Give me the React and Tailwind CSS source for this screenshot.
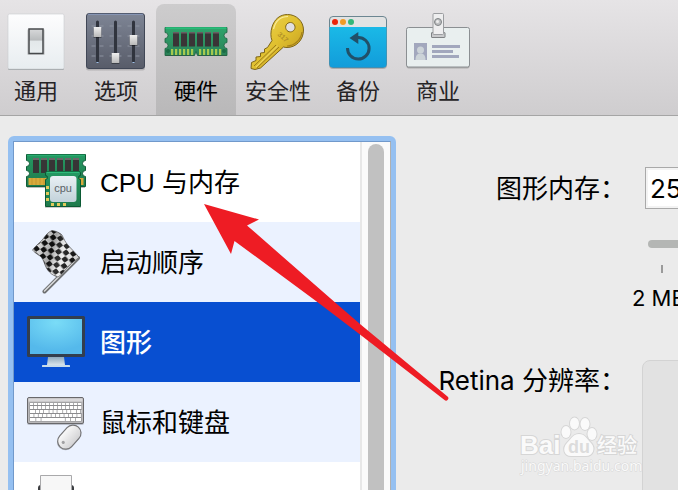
import React, { useState } from "react";

const SANS = "font-['Liberation_Sans','Noto_Sans_CJK_SC',sans-serif]";
const UI = "font-[Inter,'Noto_Sans_CJK_SC',sans-serif]";

function GeneralIcon() {
  return (
    <svg viewBox="0 0 64 60" className="w-16 h-15" aria-hidden="true">
      <defs>
        <linearGradient id="gen-plate" x1="0" y1="0" x2="0" y2="1">
          <stop offset="0" stopColor="#fdfdfe" />
          <stop offset="1" stopColor="#e8edf0" />
        </linearGradient>
        <linearGradient id="gen-switch" x1="0" y1="0" x2="0" y2="1">
          <stop offset="0" stopColor="#d8d9da" />
          <stop offset="0.45" stopColor="#b9bcbe" />
          <stop offset="0.5" stopColor="#e3e8ea" />
          <stop offset="1" stopColor="#e9eef0" />
        </linearGradient>
      </defs>
      <rect x="4" y="3" width="56" height="55" rx="1.5" fill="#9fa3a6" />
      <rect x="4" y="2" width="56" height="55" rx="1.5" fill="url(#gen-plate)" stroke="#c9cdd0" strokeWidth="0.6" />
      <rect x="23" y="17" width="18" height="26" rx="1.5" fill="#00000020" />
      <rect x="25" y="17" width="14" height="24.5" fill="url(#gen-switch)" stroke="#474a4c" strokeWidth="1.5" />
    </svg>
  );
}

function OptionsIcon() {
  const sliders = [
    { x: 13.5, y: 15 },
    { x: 31.5, y: 41 },
    { x: 49.5, y: 23 },
  ];
  return (
    <svg viewBox="0 0 64 60" className="w-16 h-15" aria-hidden="true">
      <defs>
        <linearGradient id="opt-plate" x1="0" y1="0" x2="0" y2="1">
          <stop offset="0" stopColor="#7e8595" />
          <stop offset="1" stopColor="#585c69" />
        </linearGradient>
        <linearGradient id="opt-knob" x1="0" y1="0" x2="0" y2="1">
          <stop offset="0" stopColor="#f0f0f0" />
          <stop offset="1" stopColor="#b9b9b9" />
        </linearGradient>
      </defs>
      <rect x="2" y="2.5" width="59" height="56" rx="2.5" fill="#0000002a" />
      <rect x="2.5" y="1.5" width="58" height="55" rx="2.5" fill="url(#opt-plate)" stroke="#414756" />
      <path d="M4 2.2h55" stroke="#8fa3cc" strokeWidth="0.8" />
      {sliders.map((s) => (
        <g key={s.x}>
          {[14, 24, 34, 44].map((y) => (
            <path key={y} d={`M${s.x - 6} ${y}h4M${s.x + 2} ${y}h4`} stroke="#8d93a1" strokeWidth="1.2" />
          ))}
          <path d={`M${s.x} 10v39`} stroke="#30343e" strokeWidth="3" strokeLinecap="round" />
          <path d={`M${s.x - 1} 50.5h2`} stroke="#9fc0e8" strokeWidth="1" />
          <rect x={s.x - 4} y={s.y + 1} width="8" height="10" rx="0.5" fill="#00000055" />
          <rect x={s.x - 3.8} y={s.y} width="7.6" height="10" rx="0.5" fill="url(#opt-knob)" />
        </g>
      ))}
    </svg>
  );
}

function HardwareIcon() {
  return (
    <svg viewBox="0 0 64 60" className="w-16 h-15" aria-hidden="true">
      <defs>
        <linearGradient id="ram-board" x1="0" y1="0" x2="0" y2="1">
          <stop offset="0" stopColor="#2fa46c" />
          <stop offset="1" stopColor="#2b8157" />
        </linearGradient>
      </defs>
      <path
        d="M1 15.5h62v5a3 3 0 0 0 0 6v4a3 3 0 0 0 0 6v7h-29.500l-1.500-4l-1.500 4h-29.500v-7a3 3 0 0 0 0-6v-4a3 3 0 0 0 0-6z"
        fill="url(#ram-board)"
        stroke="#17613c"
        strokeWidth="0.8"
      />
      <path d="M1.5 16h61" stroke="#27c57c" strokeWidth="1.4" />
      <path d="M2 43.5h28M34 43.5h28" stroke="#2a5f43" />
      {[9, 17, 25, 33, 41, 49].map((x) => (
        <g key={x}>
          <rect x={x} y="20" width="6" height="14.5" fill="#3a3436" />
          <rect x={x} y="20" width="6" height="1.5" fill="#685f62" />
        </g>
      ))}
      {[7, 11, 15, 19, 23, 27, 35, 39, 43, 47, 51, 55].map((x) => (
        <rect key={x} x={x} y="37" width="2.2" height="6" fill="#a6c94f" />
      ))}
      <circle cx="4" cy="39" r="2" fill="#1c6b44" />
      <circle cx="60" cy="39" r="2" fill="#1c6b44" />
    </svg>
  );
}

function SecurityIcon() {
  return (
    <svg viewBox="0 0 64 60" className="w-16 h-15" aria-hidden="true">
      <defs>
        <linearGradient id="key-gold" x1="0" y1="0" x2="1" y2="1">
          <stop offset="0" stopColor="#efd75a" />
          <stop offset="0.5" stopColor="#e0c02f" />
          <stop offset="1" stopColor="#b98f1c" />
        </linearGradient>
      </defs>
      <path
        fillRule="evenodd"
        d="M41.5 2.5C50.500 2.5 57.500 9.500 57.500 18C57.500 28 50 35.500 41 35.500C39.500 35.500 38.500 35.300 37.500 35L14.500 56L9 57.500L5 56.500L5.500 50.500L10 48.500V45L14.500 44.500V41L18.500 40.500V37L21.500 35.500L26 28.500C24.500 25 24.500 20 26 15C28.500 7 34 2.500 41.500 2.500ZM44.300 10.500a4.700 4.700 0 1 0 0.100 0z"
        fill="url(#key-gold)"
        stroke="#7d6519"
        strokeWidth="1"
      />
      <path d="M30 33L8 54M33 35L11 56" stroke="#9c7c1c" strokeWidth="1" />
      <path d="M31.500 34L10 55" stroke="#f2e07a" strokeWidth="0.8" />
      <path d="M27.500 17C29.500 9 35 4.500 42 4.500" fill="none" stroke="#f9ec9c" strokeWidth="1.2" />
      <path d="M56 20C55 28 48 34 41 34" fill="none" stroke="#a5811b" strokeWidth="1.2" />
      <text
        x="31"
        y="23"
        transform="rotate(42 31 23)"
        fontSize="7"
        fontWeight="700"
        fill="#b39328"
        className="font-['Liberation_Sans',sans-serif]"
      >
        317
      </text>
    </svg>
  );
}

function BackupIcon() {
  return (
    <svg viewBox="0 0 64 60" className="w-16 h-15" aria-hidden="true">
      <defs>
        <linearGradient id="bak-fill" x1="0" y1="0" x2="0" y2="1">
          <stop offset="0" stopColor="#1ab9e7" />
          <stop offset="1" stopColor="#129cda" />
        </linearGradient>
      </defs>
      <rect x="3" y="5" width="58" height="52" rx="4" fill="#00000033" />
      <rect x="3.5" y="4.5" width="57" height="51" rx="3.5" fill="#e2e3e3" stroke="#5f7c88" strokeWidth="0.9" />
      <path d="M4 15h56.500v37a3.500 3.500 0 0 1-3.500 3.500H7a3.500 3.500 0 0 1-3.500-3.500V15z" fill="url(#bak-fill)" />
      <circle cx="9" cy="10" r="3" fill="#ee2208" />
      <circle cx="17" cy="10" r="3" fill="#f29a25" />
      <circle cx="25" cy="10" r="3" fill="#33b779" />
      <path d="M21.500 36A10.800 10.800 0 1 0 32 25.500" fill="none" stroke="#215069" strokeWidth="3" />
      <path d="M23.500 26L32.300 20v12z" fill="#215069" />
    </svg>
  );
}

function BusinessIcon() {
  return (
    <svg viewBox="0 0 64 60" className="w-16 h-15" aria-hidden="true">
      <rect x="0.5" y="16.5" width="63" height="40" rx="2" fill="#00000033" />
      <rect x="0.5" y="15.5" width="63" height="39.5" rx="2" fill="#e9efef" stroke="#8b8f92" />
      <rect x="25.5" y="20.5" width="13.5" height="5" rx="0.5" fill="#c9cacc" stroke="#7f8284" />
      <rect x="27" y="1.5" width="10.5" height="21" rx="1" fill="#eeeeef" stroke="#9b9da0" />
      <circle cx="32" cy="10" r="3.5" fill="#bdbfc1" stroke="#7f8284" />
      <circle cx="31.5" cy="9.5" r="1.5" fill="#ececec" />
      <rect x="8" y="31" width="13" height="17" fill="#a2a7bd" />
      <circle cx="14.5" cy="38" r="3.5" fill="#ccd3d8" />
      <path d="M9.5 48c0-5 2-6.500 5-6.500s5 1.500 5 6.500z" fill="#ccd3d8" />
      <path d="M26 34.500h28M26 39.500h21M26 44.500h27" stroke="#a2a7bd" strokeWidth="3" />
    </svg>
  );
}

function CpuIcon() {
  return (
    <svg viewBox="0 0 64 64" className="size-16" aria-hidden="true">
      <defs>
        <linearGradient id="cpu-board" x1="0" y1="0" x2="0" y2="1">
          <stop offset="0" stopColor="#259963" />
          <stop offset="1" stopColor="#1f7a4c" />
        </linearGradient>
        <linearGradient id="cpu-face" x1="0" y1="0" x2="0" y2="1">
          <stop offset="0" stopColor="#e9f0f4" />
          <stop offset="1" stopColor="#c2d2da" />
        </linearGradient>
      </defs>
      <path
        d="M2.500 4.500h59v6a3 3 0 0 0 0 6v4a3 3 0 0 0 0 6v10h-59v-10a3 3 0 0 0 0-6v-4a3 3 0 0 0 0-6z"
        fill="url(#cpu-board)"
        stroke="#0f5c37"
      />
      <path d="M3 5.200h58" stroke="#2dc07c" strokeWidth="0.8" />
      <path d="M3 37.500h58" stroke="#00000044" />
      {[9, 17, 25, 33, 41, 49].map((x) => (
        <g key={x}>
          <rect x={x} y="8" width="6" height="15" rx="0.5" fill="#373536" />
          <rect x={x} y="8" width="6" height="2" fill="#6a6768" />
        </g>
      ))}
      <rect x="4.5" y="28" width="55" height="7" fill="#d8aa3c" />
      {[8, 12, 16, 20].map((x) => (
        <path key={x} d={`M${x} 28v7`} stroke="#b98a26" strokeWidth="0.6" />
      ))}
      <path
        d="M22.500 21.500h33l1 1v3a2 2 0 0 0 0 4v27h-35v-27a2 2 0 0 0 0-4v-3z"
        fill="url(#cpu-board)"
        stroke="#0b5a34"
      />
      <path d="M23 22.300h32" stroke="#32c583" />
      <path d="M21 57.500h36" stroke="#00000033" />
      {[36, 42, 48].map((y) => (
        <rect key={y} x="22" y={y} width="3" height="3" fill="#e2ca5b" />
      ))}
      {[27, 33, 39].map((x) => (
        <rect key={x} x={x} y="53" width="3" height="3" fill="#e2ca5b" />
      ))}
      <rect x="26" y="26" width="26.5" height="26" rx="3" fill="url(#cpu-face)" />
      <text
        x="39"
        y="42"
        fontSize="11"
        textAnchor="middle"
        fill="#5c6266"
        className="font-['Liberation_Sans',sans-serif]"
      >
        cpu
      </text>
    </svg>
  );
}

const FLAG_CLOTH =
  "M28 0.5C32 1 36 3 38 5C40 9 41 12 44 15C47 19 52 23 55 27.500C49 32 45 35 42 39C39 43 37 45 34 47C31 46 28 45 25.500 42C20 37 21 30 16 26C13 24 10 22 8.500 20C12 15 16 13 19 9C22 5 24 2 28 0.500Z";

function FlagIcon() {
  return (
    <svg viewBox="0 0 64 64" className="size-16" aria-hidden="true">
      <defs>
        <pattern id="flag-check" width="10" height="10" patternUnits="userSpaceOnUse" patternTransform="rotate(50) skewX(-6)">
          <rect width="10" height="10" fill="#ececec" />
          <rect width="5" height="5" rx="1" fill="#141414" />
          <rect x="5" y="5" width="5" height="5" rx="1" fill="#141414" />
        </pattern>
        <linearGradient id="flag-shade" x1="0" y1="0" x2="1" y2="0.3">
          <stop offset="0.1" stopColor="#000" stopOpacity="0" />
          <stop offset="0.5" stopColor="#000" stopOpacity="0.3" />
          <stop offset="0.75" stopColor="#fff" stopOpacity="0.1" />
          <stop offset="1" stopColor="#000" stopOpacity="0.1" />
        </linearGradient>
      </defs>
      <path d="M54 28L20.500 61.500" stroke="#6d6f70" strokeWidth="4" strokeLinecap="round" />
      <path d="M54 27.500L20.500 61" stroke="#dcdddd" strokeWidth="1.5" strokeLinecap="round" />
      <path d={FLAG_CLOTH} fill="url(#flag-check)" stroke="#555" strokeWidth="0.7" />
      <path d={FLAG_CLOTH} fill="url(#flag-shade)" />
    </svg>
  );
}

function MonitorIcon() {
  return (
    <svg viewBox="0 0 64 64" className="size-16" aria-hidden="true">
      <defs>
        <radialGradient id="mon-screen" cx="0.5" cy="0.1" r="0.8">
          <stop offset="0" stopColor="#7adcf7" />
          <stop offset="1" stopColor="#55b9eb" />
        </radialGradient>
        <linearGradient id="mon-stand" x1="0" y1="0" x2="0" y2="1">
          <stop offset="0" stopColor="#8fa9bd" />
          <stop offset="1" stopColor="#d7e3ea" />
        </linearGradient>
      </defs>
      <path d="M24 47h16l1 8H23z" fill="url(#mon-stand)" />
      <rect x="18" y="55" width="28" height="2" rx="0.5" fill="#c8dcea" />
      <rect x="3" y="6" width="58" height="41" rx="1.5" fill="#333e4e" />
      <rect x="6" y="9" width="52" height="35" fill="url(#mon-screen)" />
    </svg>
  );
}

function KeyboardIcon() {
  return (
    <svg viewBox="0 0 64 64" className="size-16" aria-hidden="true">
      <defs>
        <linearGradient id="mouse-body" x1="0" y1="0" x2="1" y2="0">
          <stop offset="0" stopColor="#fafafa" />
          <stop offset="1" stopColor="#d2d2d4" />
        </linearGradient>
      </defs>
      <rect x="3" y="8.5" width="57" height="26.5" rx="2" fill="#00000033" />
      <rect x="3.5" y="7.5" width="56" height="26" rx="1.5" fill="#b9b8ba" stroke="#68686b" />
      <rect x="4.5" y="8.5" width="54" height="3" fill="#d9d8da" />
      <rect x="5.5" y="12.5" width="52" height="19" fill="#8b8b8e" />
      <path d="M6 14h51.500" stroke="#fff" strokeWidth="2" strokeDasharray="3.300 0.700" />
      <path d="M6 17.500h51.500" stroke="#fff" strokeWidth="3" strokeDasharray="3.300 0.700" />
      <path d="M6 21.500h51.500" stroke="#fff" strokeWidth="3" strokeDasharray="5 0.700 3.300 0.700 3.300 0.700" />
      <path d="M6 25.500h51.500" stroke="#fff" strokeWidth="3" strokeDasharray="3.600 0.700" />
      <path d="M6 29.500h5.500m0.700 0h4.500m0.700 0h23.500m0.700 0h4.500m0.700 0h4.500m0.700 0h5" stroke="#fff" strokeWidth="3" />
      <g transform="rotate(42 45 47.500)">
        <rect x="37" y="34.5" width="16.5" height="27" rx="8" fill="#00000033" />
        <rect x="37" y="33.5" width="16" height="27" rx="8" fill="url(#mouse-body)" stroke="#757577" strokeWidth="1.2" />
        <circle cx="44" cy="55" r="1.6" fill="#a1a1a3" />
      </g>
    </svg>
  );
}

function PrinterIcon() {
  return (
    <svg viewBox="0 0 64 64" className="size-16" aria-hidden="true">
      <rect x="14" y="15" width="36" height="30" rx="3" fill="#3b3d40" />
      <path d="M16.500 5.500h31V24h-31z" fill="#f7f7f7" stroke="#a9a9ab" />
    </svg>
  );
}

const TABS = [
  { id: "general", label: "通用", icon: GeneralIcon, extra: "-ml-1" },
  { id: "options", label: "选项", icon: OptionsIcon },
  { id: "hardware", label: "硬件", icon: HardwareIcon },
  { id: "security", label: "安全性", icon: SecurityIcon, extra: "ml-0.5" },
  { id: "backup", label: "备份", icon: BackupIcon },
  { id: "business", label: "商业", icon: BusinessIcon },
];

const DEVICES = [
  { id: "cpu", label: "CPU 与内存", icon: CpuIcon },
  { id: "boot", label: "启动顺序", icon: FlagIcon },
  { id: "graphics", label: "图形", icon: MonitorIcon },
  { id: "input", label: "鼠标和键盘", icon: KeyboardIcon },
  { id: "printer", icon: PrinterIcon },
];

function Toolbar({ active, onChange }) {
  return (
    <nav className="flex shrink-0 pt-1 bg-linear-to-b from-[#e6e4e6] to-[#cfcdcf] border-b border-[#a5a5a5]">
      {TABS.map(({ id, label, icon: Icon, extra }) => (
        <button
          key={id}
          type="button"
          onClick={() => onChange(id)}
          className={`flex flex-col items-center w-20 h-[111px] pt-2 shrink-0 rounded-t-lg ${extra || ""} ${
            active === id ? "bg-linear-to-b from-[#cdcccd] to-[#b9b8b9] text-black" : "text-[#262426]"
          }`}
        >
          <Icon />
          <span className={`${SANS} text-[22px] leading-10 whitespace-nowrap`}>{label}</span>
        </button>
      ))}
    </nav>
  );
}

function DeviceList({ selected, onSelect }) {
  return (
    <aside className="flex shrink-0 w-[388px] ml-2 mt-5 -mb-4 rounded-md border-[5px] border-[#95c0f1] bg-[#95c0f1]">
      <div className="flex flex-1 min-w-0 border border-[#7199cb] border-r-[#b0b0b0] bg-white">
        <ul className="flex-1 min-w-0">
          {DEVICES.map(({ id, label, icon: Icon }, i) => (
            <li key={id}>
              <button
                type="button"
                aria-label={label || id}
                onClick={() => onSelect(id)}
                className={`flex items-center gap-3 w-full h-20 pl-2.5 text-left ${SANS} text-[26px] whitespace-nowrap ${
                  selected === id
                    ? "bg-[#084fd1] text-white font-medium"
                    : i % 2
                      ? "bg-[#ebf2ff] text-black"
                      : "bg-white text-black"
                }`}
              >
                <Icon />
                {label && <span className="pt-0.5">{label}</span>}
              </button>
            </li>
          ))}
        </ul>
        <div className="w-[30px] pt-0.5 px-1.5 border-l-2 border-[#e7e7e7] bg-[#fafafa]">
          <div className="w-4 h-full rounded-full bg-[#c1c1c1]" />
        </div>
      </div>
    </aside>
  );
}

function GraphicsSettings() {
  const [memory, setMemory] = useState("256 MB");
  const [level, setLevel] = useState(80);

  return (
    <section className={`grid grid-cols-[230px_minmax(300px,1fr)] gap-x-4 content-start flex-1 min-w-0 pt-[51px] ${UI} text-[26px] text-black`}>
      <label htmlFor="memory" className="h-[42px] leading-[44px] text-right whitespace-nowrap">
        图形内存：
      </label>
      <div>
        <input
          id="memory"
          value={memory}
          onChange={(e) => setMemory(e.target.value)}
          className="block w-40 h-[42px] ml-[3px] pl-1 border border-[#a9a9a9] outline-2 -outline-offset-3 outline-[#f3f3f3] bg-white"
        />
        <input
          type="range"
          aria-label="图形内存"
          min="0"
          max="100"
          value={level}
          onChange={(e) => setLevel(e.target.value)}
          className="block w-72 h-2 mt-[31px] ml-1.5 appearance-none rounded-full bg-[#b4b6b4]"
        />
        <div className="w-0.5 h-2 mt-[17px] ml-[19px] bg-[#9a9a9a]" />
        <div className="mt-2 -ml-2.5 text-[22px] leading-[34px]">2 MB</div>
      </div>
      <div className="mt-12 h-9 leading-9 text-right whitespace-nowrap">Retina 分辨率：</div>
      <div className="mt-[45px] h-40 rounded-lg border border-[#d3d3d3] bg-[#e2e2e2]" />
    </section>
  );
}

function Watermark() {
  return (
    <svg
      viewBox="0 0 124 62"
      className="absolute left-[518px] top-[415px] w-31 pointer-events-none"
      fill="#fafafa"
      stroke="#d6d6d6"
      strokeWidth="2"
      paintOrder="stroke"
      aria-hidden="true"
    >
      <g className="font-['Liberation_Sans','Noto_Sans_CJK_SC',sans-serif]" fontWeight="700">
        <text x="2" y="39" fontSize="26">Bai</text>
        <text x="79" y="38" fontSize="20" fontWeight="500">经验</text>
      </g>
      <ellipse cx="48" cy="17" rx="4.5" ry="6" />
      <ellipse cx="56.5" cy="8.5" rx="4.5" ry="6" />
      <ellipse cx="67" cy="9" rx="4.5" ry="6" />
      <ellipse cx="74" cy="19" rx="4.5" ry="6" />
      <path d="M61 19C67 19 69 24 73 28C78 33 75 41 68 41H53C46 41 44 33 49 28C53 24 55 19 61 19Z" />
      <text
        x="61"
        y="38"
        fontSize="18"
        fontWeight="700"
        textAnchor="middle"
        fill="#dcdcdc"
        stroke="none"
        className="font-['Liberation_Sans',sans-serif]"
      >
        du
      </text>
      <text x="3" y="56" fontSize="14" strokeWidth="1" className="font-['Noto_Sans',sans-serif]">jingyan.baidu.com</text>
    </svg>
  );
}

export default function App() {
  const [tab, setTab] = useState("hardware");
  const [device, setDevice] = useState("graphics");

  return (
    <div className="relative flex flex-col h-screen overflow-hidden bg-[#ebebeb]">
      <Toolbar active={tab} onChange={setTab} />
      <main className="flex flex-1 min-h-0">
        <DeviceList selected={device} onSelect={setDevice} />
        <GraphicsSettings />
      </main>

      <Watermark />

      {/* Pointer to the CPU row */}
      <svg viewBox="0 0 246 198" className="absolute left-[203px] top-[203px] w-[246px] pointer-events-none" aria-hidden="true">
        <path
          d="M1 1L56 16.500L44 22.500L131 98.500L157 121L244.500 193.500A2 2 0 0 1 241.500 197L157 131.500L115 99.500L31.500 38L28 51Z"
          fill="#ee1c24"
        />
      </svg>
    </div>
  );
}
